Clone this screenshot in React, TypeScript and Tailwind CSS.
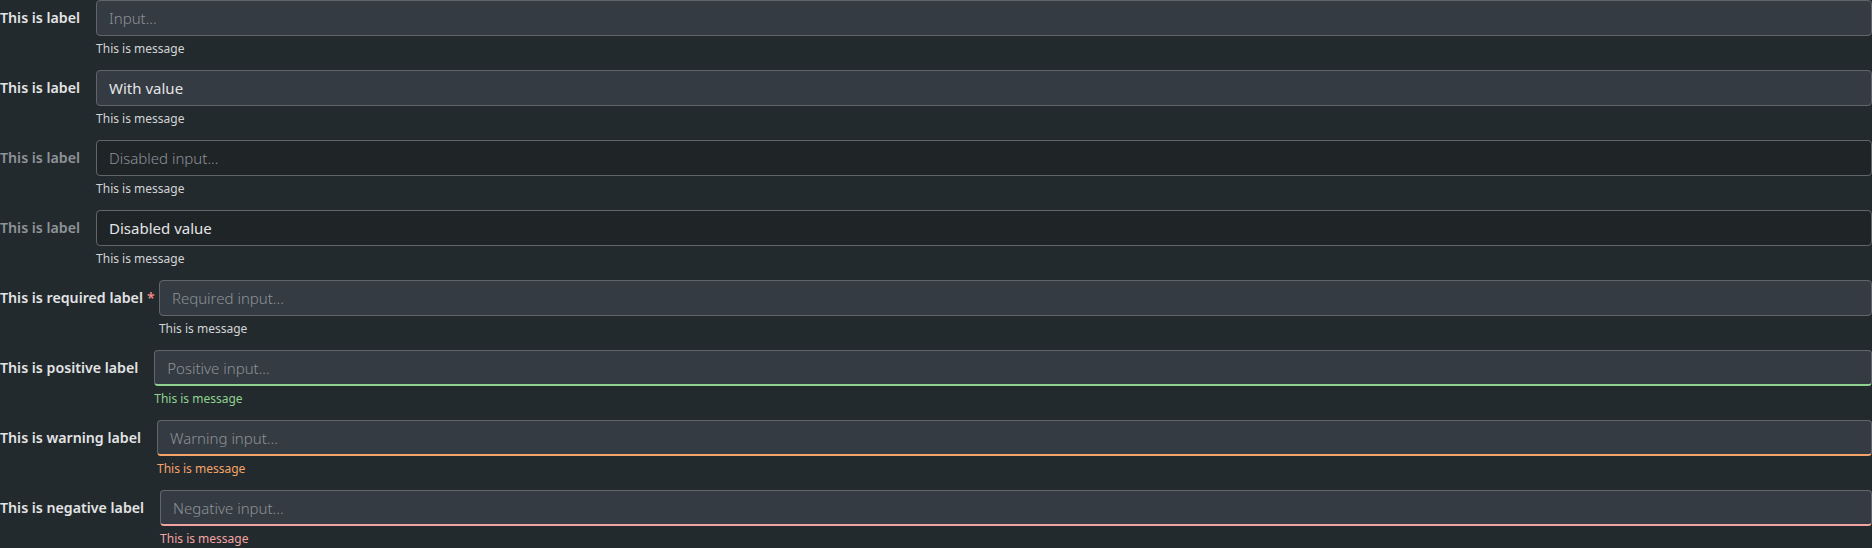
import React from 'react';

type Status = 'none' | 'positive' | 'warning' | 'negative';

type FieldProps = {
  label: string;
  placeholder: string;
  value?: string;
  disabled?: boolean;
  required?: boolean;
  status?: Status;
};

const bottomBorder: Record<Status, string> = {
  none: '',
  positive: 'border-b-2 border-b-[#8fd28f]',
  warning: 'border-b-2 border-b-[#f4a468]',
  negative: 'border-b-2 border-b-[#f2a4a4]',
};

const messageColor: Record<Status, string> = {
  none: 'text-[#d2d4d6]',
  positive: 'text-[#8fd28f]',
  warning: 'text-[#f4a468]',
  negative: 'text-[#f2a4a4]',
};

function Field({ label, placeholder, value, disabled, required, status = 'none' }: FieldProps) {
  return (
    <div className="flex items-start gap-4">
      <label
        className={`relative flex h-9 shrink-0 items-center text-[14.2px] font-semibold ${
          disabled ? 'text-[#8f9498]' : 'text-[#e3e4e5]'
        }`}
      >
        {label}
        {required && (
          <span className="absolute left-full ml-[4px] text-[#f28c8c]">*</span>
        )}
      </label>
      <div className="flex min-w-0 flex-1 flex-col">
        <input
          className={`h-9 w-full rounded-[4px] border border-[#62666a] px-3 text-[15px] text-[#e4e5e6] outline-none placeholder:font-light placeholder:text-[#8d9297] ${
            disabled ? 'bg-[#1f2427]' : 'bg-[#343b42]'
          } ${bottomBorder[status]}`}
          placeholder={placeholder}
          defaultValue={value}
          disabled={disabled}
        />
        <div className={`mt-[4px] h-[30px] text-[12px] leading-[18px] ${messageColor[status]}`}>
          This is message
        </div>
      </div>
    </div>
  );
}

export default function App() {
  return (
    <div className="min-h-screen bg-[#232a2e] font-['Noto_Sans',sans-serif]">
      <Field label="This is label" placeholder="Input..." />
      <Field label="This is label" placeholder="Input..." value="With value" />
      <Field label="This is label" placeholder="Disabled input..." disabled />
      <Field label="This is label" placeholder="Disabled input..." value="Disabled value" disabled />
      <Field label="This is required label" placeholder="Required input..." required />
      <Field label="This is positive label" placeholder="Positive input..." status="positive" />
      <Field label="This is warning label" placeholder="Warning input..." status="warning" />
      <Field label="This is negative label" placeholder="Negative input..." status="negative" />
    </div>
  );
}
